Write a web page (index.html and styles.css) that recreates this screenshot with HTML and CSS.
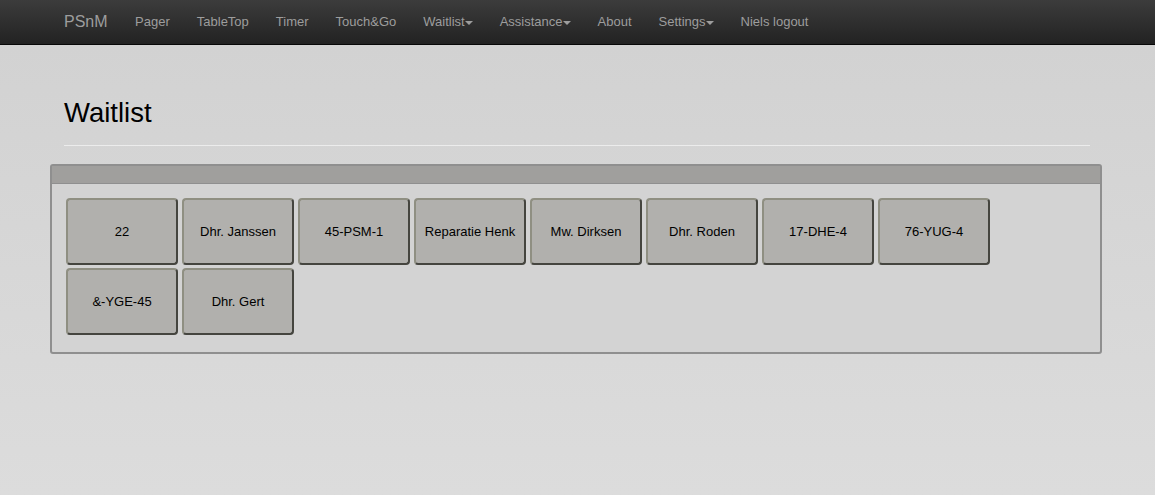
FILE: index.html
```html
<!DOCTYPE html>
<html lang="nl">
<head>
  <title>PSnM - Waitlist</title>
  <link rel="stylesheet" href="styles.css">
</head>
<body>

  <nav class="navbar">
    <div class="nav-inner">
      <a class="brand" href="#">PSnM</a>
      <ul class="nav">
        <li><a href="#">Pager</a></li>
        <li><a href="#">TableTop</a></li>
        <li><a href="#">Timer</a></li>
        <li><a href="#">Touch&amp;Go</a></li>
        <li><a href="#">Waitlist<span class="caret"></span></a></li>
        <li><a href="#">Assistance<span class="caret"></span></a></li>
        <li><a href="#">About</a></li>
        <li><a href="#">Settings<span class="caret"></span></a></li>
        <li><a href="#">Niels logout</a></li>
      </ul>
    </div>
  </nav>

  <div class="container">
    <div class="page-header">
      <h1>Waitlist</h1>
    </div>

    <div class="panel">
      <div class="panel-heading"></div>
      <div class="panel-body">
        <button class="wait-btn">22</button>
        <button class="wait-btn">Dhr. Janssen</button>
        <button class="wait-btn">45-PSM-1</button>
        <button class="wait-btn">Reparatie Henk</button>
        <button class="wait-btn">Mw. Dirksen</button>
        <button class="wait-btn">Dhr. Roden</button>
        <button class="wait-btn">17-DHE-4</button>
        <button class="wait-btn">76-YUG-4</button>
        <button class="wait-btn">&amp;-YGE-45</button>
        <button class="wait-btn">Dhr. Gert</button>
      </div>
    </div>
  </div>

</body>
</html>
```

FILE: styles.css
```css
html {
  height: 100%;
}

body {
  margin: 0;
  min-height: 100%;
  font-family: "Liberation Sans", Arial, sans-serif;
  font-size: 13px;
  color: #000;
  background: linear-gradient(to bottom, #d1d1d1, #dcdcdc);
}

/* Barre de navigation */
.navbar {
  height: 44px;
  background: linear-gradient(to bottom, #3c3c3c, #222222);
  border-bottom: 1px solid #080808;
}

.nav-inner {
  display: flex;
  align-items: center;
  height: 100%;
  padding-left: 64px;
}

.brand {
  font-size: 16px;
  color: #9d9d9d;
  text-decoration: none;
  margin-right: 14px;
}

.nav {
  display: flex;
  list-style: none;
  margin: 0;
  padding: 0;
}

.nav a {
  display: block;
  padding: 0 13.5px;
  line-height: 44px;
  color: #9d9d9d;
  text-decoration: none;
}

.caret {
  display: inline-block;
  width: 0;
  height: 0;
  vertical-align: middle;
  border-top: 4px solid #9d9d9d;
  border-left: 4px solid transparent;
  border-right: 4px solid transparent;
}

/* Contenu */
.container {
  padding: 0 53px 0 50px;
}

.page-header {
  margin: 0 12px 18px 14px;
  padding-top: 52px;
  padding-bottom: 16px;
  border-bottom: 1px solid #ececec;
}

.page-header h1 {
  margin: 0;
  font-size: 27.5px;
  font-weight: normal;
  line-height: 32px;
}

.panel {
  border: 2px solid #8f8f8f;
  border-radius: 3px;
  background-color: #d3d3d3;
}

.panel-heading {
  height: 17px;
  background-color: #a09f9d;
  border-bottom: 1px solid #8f8f8f;
}

.panel-body {
  display: flex;
  flex-wrap: wrap;
  gap: 3px 4px;
  padding: 14px 14px 17px 14px;
}

.wait-btn {
  width: 112px;
  height: 67px;
  padding: 0;
  font-family: "Liberation Sans", Arial, sans-serif;
  font-size: 13px;
  color: #000;
  background-color: #b1b0ad;
  border: 2px solid;
  border-color: #8f8f82 #45453f #45453f #8f8f82;
  border-radius: 4px;
  cursor: pointer;
}
```
